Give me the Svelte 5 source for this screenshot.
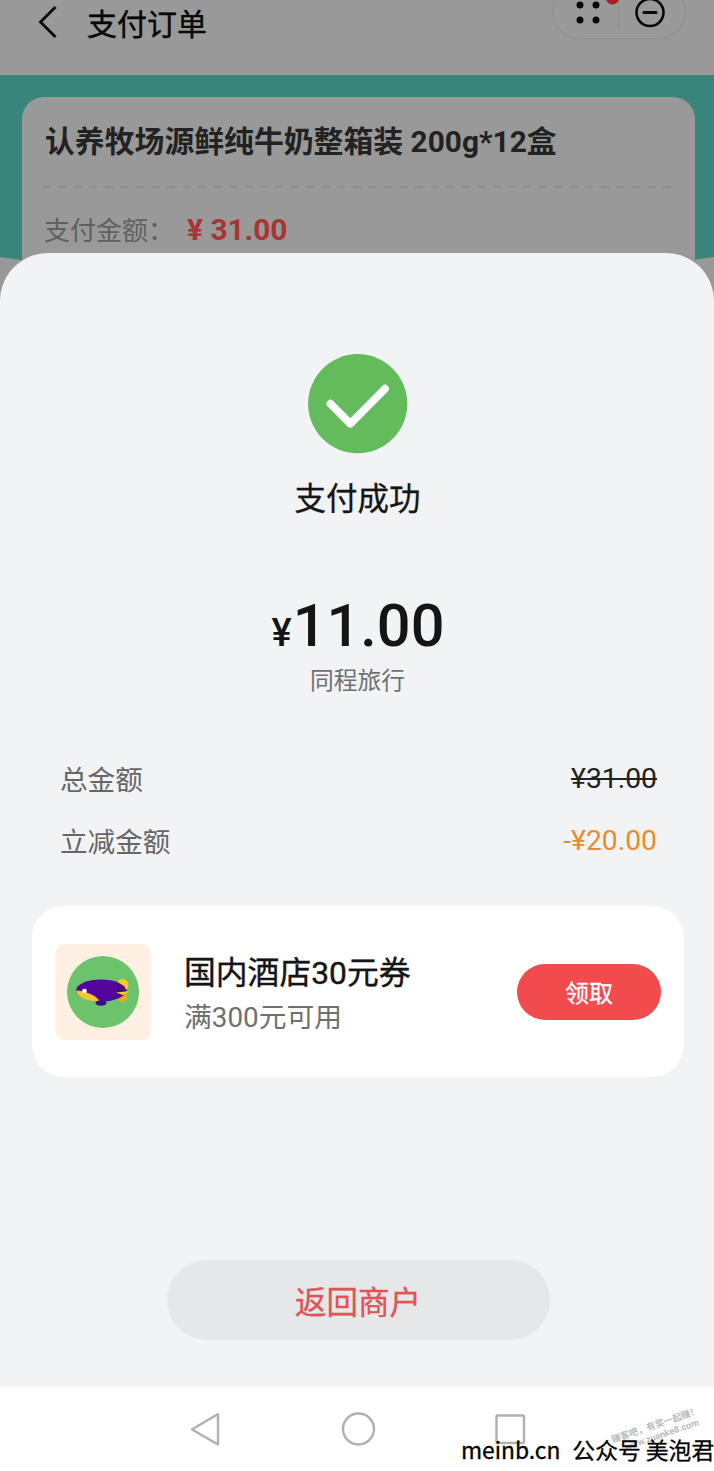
<script>
  const rows = [
    { label: '总金额', value: '¥31.00', kind: 'old' },
    { label: '立减金额', value: '-¥20.00', kind: 'off' }
  ];
  const dots = [[580, 5], [596, 5], [580, 20], [596, 20]];
</script>

<div class="screen">
  <header class="topbar">
    <svg class="back" width="20" height="34" viewBox="0 0 20 34"><path d="M17.500 2 2.500 17 17.500 32" fill="none" stroke="#080808" stroke-width="2.8" /></svg>
    <h1>支付订单</h1>
    <svg class="capsule" width="136" height="42" viewBox="551 0 136 42">
      <rect x="552.5" y="-15" width="133" height="53.500" rx="26.700" fill="none" stroke="#8e8e8e" />
      <path d="M618.5 0V28" stroke="#8e8e8e" />
      {#each dots as [x, y]}<circle cx={x} cy={y} r="3.5" fill="#080808" />{/each}
      <circle cx="612.5" cy="-2" r="6.5" fill="#a91f20" />
      <circle cx="650" cy="12.5" r="13.5" fill="none" stroke="#080808" stroke-width="2.6" />
      <path d="M644 12.5H656" stroke="#080808" stroke-width="3" stroke-linecap="round" />
    </svg>
  </header>

  <section class="hero">
    <div class="order">
      <h2>认养牧场源鲜纯牛奶整箱装 200g*12盒</h2>
      <svg class="dash" width="632" height="2"><path d="M0 1H632" stroke="#8b8b8b" stroke-width="1.500" stroke-dasharray="8 7.5" /></svg>
      <div class="due"><span>支付金额：</span><b>¥ 31.00</b></div>
    </div>
  </section>

  <main class="sheet">
    <svg class="ok" width="100" height="100" viewBox="0 0 100 100">
      <circle cx="49.700" cy="49.700" r="49.600" fill="#63bb5c" />
      <path d="M22.5 49.700 42.300 69.700 77 34.700" fill="none" stroke="#fff" stroke-width="7.800" stroke-linecap="round" stroke-linejoin="round" />
    </svg>
    <p class="status">支付成功</p>
    <p class="amount"><span>¥</span>11.00</p>
    <p class="merchant">同程旅行</p>

    <div class="rows">
      {#each rows as r}
        <div class="row"><span>{r.label}</span><span class={r.kind}>{r.value}</span></div>
      {/each}
    </div>

    <div class="coupon">
      <svg class="logo" width="96" height="96" viewBox="0 0 96 96">
        <rect width="96" height="96" rx="10" fill="#fff0e3" />
        <circle cx="48" cy="48" r="36" fill="#6bc46c" />
        <circle cx="67.500" cy="41" r="6" fill="#f7cf18" />
        <ellipse cx="67" cy="53" rx="5.500" ry="5" fill="#dfad16" />
        <ellipse cx="46" cy="46.500" rx="25" ry="11" fill="#53059d" />
        <path d="M62 39.500 72.500 46.500 62 54Z" fill="#4a0870" />
        <path d="M21 46.500C30 47 41 51 45 57.500C33 58 22 53.500 21 46.500Z" fill="#f3c62b" />
        <path d="M61 48.500 75 47 68 51Z" fill="#f8cf28" />
        <ellipse cx="46" cy="59" rx="5.500" ry="2.700" fill="#3b0c8e" />
        <circle cx="29.500" cy="47" r="2.300" fill="#fff" />
      </svg>
      <div class="info"><strong>国内酒店30元券</strong><span>满300元可用</span></div>
      <button class="claim">领取</button>
    </div>

    <button class="return">返回商户</button>
  </main>

  <nav class="nav">
    <svg width="714" height="84" viewBox="0 1387 714 84" fill="none" stroke="#b0b0b0" stroke-width="2.400" stroke-linejoin="round">
      <path d="M192 1429.500 218 1414V1444.500Z" />
      <circle cx="358.500" cy="1429" r="15.500" />
      <rect x="496.500" y="1415.500" width="27.500" height="27.500" rx="1" />
    </svg>
    <div class="stamp"><span>赚客吧，有奖一起赚！</span><span class="url">www.zuanke8.com</span></div>
    <div class="mark"><span>meinb.cn</span><span>公众号 美泡君</span></div>
  </nav>
</div>

<style>
  :global(body) { margin: 0; background: #fff; }
  .screen { width: 714px; height: 1471px; overflow: hidden; display: flex; flex-direction: column; background: #999; font-family: Roboto, "Noto Sans CJK SC", sans-serif; color: #151515; }
  h1, h2, p { margin: 0; font-weight: 400; }
  button { border: 0; padding: 0; font-family: inherit; display: flex; align-items: center; justify-content: center; }
  .topbar { height: 75px; display: flex; align-items: flex-start; flex: none; }
  .back { margin: 5px 0 0 38px; flex: none; }
  h1 { margin-left: 29px; font-size: 30px; line-height: 49px; color: #080808; -webkit-text-stroke: .4px; }
  .capsule { margin-left: auto; margin-right: 27px; }
  .hero { height: 188px; flex: none; padding: 22px 19px 0 22px; box-sizing: border-box; background: #3a857b; clip-path: polygon(0 0, 100% 0, 100% 182px, 97% 185px, 94% 188px, 6% 188px, 3% 185px, 0 182px); }
  .order { height: 190px; box-sizing: border-box; border-radius: 22px; background: #999; padding: 23px 21px 0; }
  h2 { font-size: 29.850px; line-height: 44px; font-weight: 700; color: #222; padding-left: 2px; white-space: nowrap; }
  .dash { display: block; margin-top: 22px; }
  .due { display: flex; align-items: center; margin-top: 22px; line-height: 40px; padding-left: 1px; }
  .due span { width: 143px; font-size: 26px; color: #606060; white-space: nowrap; padding-top: 1px; }
  .due b { font-size: 29.800px; line-height: 38px; margin-top: -2px; color: #a73535; }
  .sheet { height: 1134px; flex: none; margin-top: -10px; padding-left: 2px; box-sizing: border-box; border-radius: 48px 48px 0 0; background: #f1f3f5; display: flex; flex-direction: column; align-items: center; position: relative; }
  .ok { margin-top: 101px; flex: none; }
  .status { margin-top: 21px; font-size: 31.500px; line-height: 50px; -webkit-text-stroke: .3px; padding-right: 1px; }
  .amount { margin-top: 61px; font-size: 59.500px; line-height: 80px; font-weight: 500; }
  .amount span { font-size: 38px; margin-right: 1px; }
  .merchant { margin-top: -10px; font-size: 23.800px; line-height: 36px; color: #707070; padding-right: 1px; }
  .rows { align-self: stretch; margin: 48px 57px 0 58px; }
  .row { height: 62px; display: flex; align-items: center; justify-content: space-between; font-size: 27.600px; color: #666; }
  .row .old, .row .off { font-size: 28.300px; }
  .row .old { color: #222; text-decoration: line-through; text-decoration-thickness: 2px; }
  .row .off { color: #e88d2c; }
  .coupon { width: 652px; height: 171px; box-sizing: border-box; border-radius: 32px; margin-top: 35px; background: #fff; display: flex; align-items: center; padding: 0 23px; }
  .info { margin-left: 33px; margin-top: 6px; display: flex; flex-direction: column; }
  .info strong { font-size: 31.800px; line-height: 46px; font-weight: 400; -webkit-text-stroke: .4px; }
  .info span { font-size: 27.800px; line-height: 43px; color: #707070; }
  .claim { margin-left: auto; width: 144px; height: 56px; border-radius: 28px; background: #f24b4e; color: #fff; font-size: 24px; -webkit-text-stroke: .3px; }
  .return { width: 383px; height: 80px; border-radius: 40px; background: #e6e7e9; margin-top: 183px; color: #e25354; font-size: 31.500px; -webkit-text-stroke: .3px; }
  .nav { height: 84px; flex: none; background: #fff; position: relative; }
  .nav svg { display: block; }
  .mark { position: absolute; left: 461px; top: 47px; width: 253px; display: flex; gap: 12px; font-family: "Noto Sans CJK SC", sans-serif; font-size: 22.800px; line-height: 32px; color: #000; white-space: nowrap; -webkit-text-stroke: .3px; }
  .stamp { position: absolute; left: 611px; top: 32px; transform: rotate(-19deg); display: flex; flex-direction: column; font-size: 9.200px; line-height: 11px; color: #bbb; font-weight: 700; white-space: nowrap; }
  .stamp .url { padding-left: 10px; }
</style>
